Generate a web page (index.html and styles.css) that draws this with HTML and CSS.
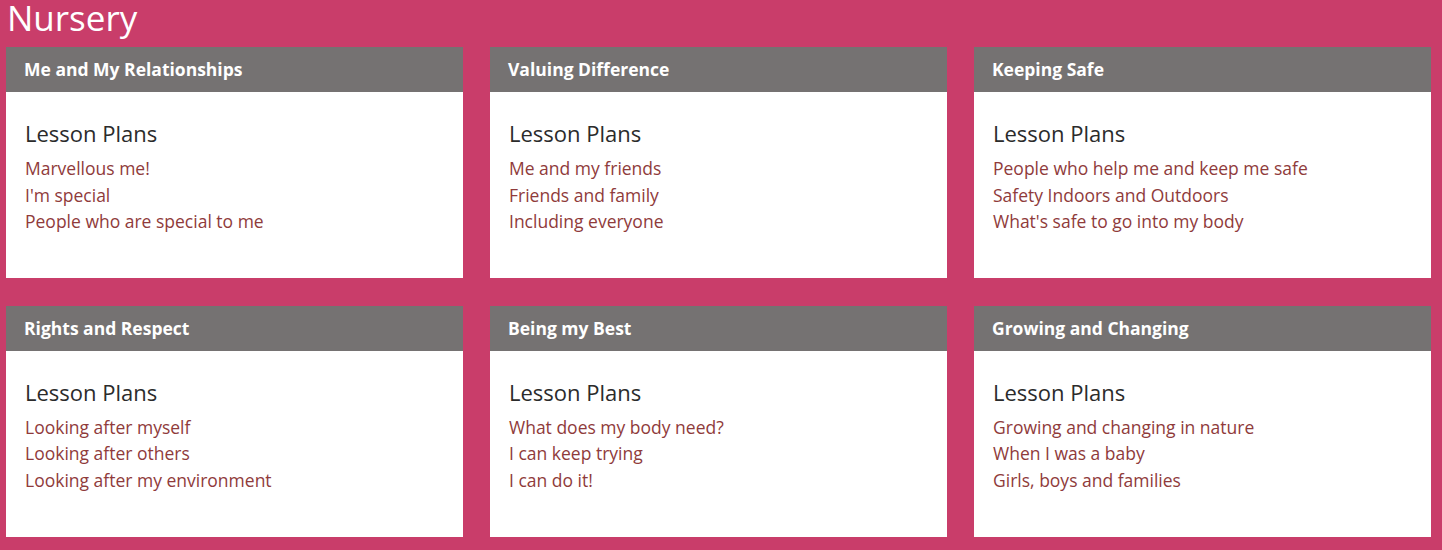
FILE: index.html
```html
<!DOCTYPE html>
<html lang="en">
<head>
<meta charset="utf-8">
<title>Nursery</title>
<link rel="stylesheet" href="styles.css">
</head>
<body>
<h1 class="page-title">Nursery</h1>
<div class="grid">
  <section class="card">
    <h2 class="card-head">Me and My Relationships</h2>
    <div class="card-body">
      <h3 class="card-sub">Lesson Plans</h3>
      <ul class="links">
        <li><a href="#">Marvellous me!</a></li>
        <li><a href="#">I'm special</a></li>
        <li><a href="#">People who are special to me</a></li>
      </ul>
    </div>
  </section>
  <section class="card">
    <h2 class="card-head">Valuing Difference</h2>
    <div class="card-body">
      <h3 class="card-sub">Lesson Plans</h3>
      <ul class="links">
        <li><a href="#">Me and my friends</a></li>
        <li><a href="#">Friends and family</a></li>
        <li><a href="#">Including everyone</a></li>
      </ul>
    </div>
  </section>
  <section class="card">
    <h2 class="card-head">Keeping Safe</h2>
    <div class="card-body">
      <h3 class="card-sub">Lesson Plans</h3>
      <ul class="links">
        <li><a href="#">People who help me and keep me safe</a></li>
        <li><a href="#">Safety Indoors and Outdoors</a></li>
        <li><a href="#">What's safe to go into my body</a></li>
      </ul>
    </div>
  </section>
  <section class="card">
    <h2 class="card-head">Rights and Respect</h2>
    <div class="card-body">
      <h3 class="card-sub">Lesson Plans</h3>
      <ul class="links">
        <li><a href="#">Looking after myself</a></li>
        <li><a href="#">Looking after others</a></li>
        <li><a href="#">Looking after my environment</a></li>
      </ul>
    </div>
  </section>
  <section class="card">
    <h2 class="card-head">Being my Best</h2>
    <div class="card-body">
      <h3 class="card-sub">Lesson Plans</h3>
      <ul class="links">
        <li><a href="#">What does my body need?</a></li>
        <li><a href="#">I can keep trying</a></li>
        <li><a href="#">I can do it!</a></li>
      </ul>
    </div>
  </section>
  <section class="card">
    <h2 class="card-head">Growing and Changing</h2>
    <div class="card-body">
      <h3 class="card-sub">Lesson Plans</h3>
      <ul class="links">
        <li><a href="#">Growing and changing in nature</a></li>
        <li><a href="#">When I was a baby</a></li>
        <li><a href="#">Girls, boys and families</a></li>
      </ul>
    </div>
  </section>
</div>
</body>
</html>
```

FILE: styles.css
```css
html, body {
  margin: 0;
  padding: 0;
}
body {
  background: #c93d6a;
  font-family: "Open Sans", "Noto Sans", sans-serif;
  height: 550px;
  overflow: hidden;
}
.page-title {
  margin: 0;
  padding: 0 0 0 7px;
  font-size: 35px;
  line-height: 36px;
  font-weight: 400;
  color: #ffffff;
}
.grid {
  display: grid;
  grid-template-columns: repeat(3, 1fr);
  column-gap: 27px;
  row-gap: 27.5px;
  padding: 11px 11px 0 6px;
}
.card {
  background: #ffffff;
  display: flex;
  flex-direction: column;
}
.card-head {
  margin: 0;
  background: #757272;
  color: #ffffff;
  height: 45px;
  line-height: 45px;
  font-size: 17.5px;
  font-weight: 700;
  padding-left: 18px;
}
.card-body {
  padding: 29px 19px 43.5px 19px;
}
.card-sub {
  margin: 0 0 10px 0;
  font-size: 22px;
  line-height: 24px;
  font-weight: 400;
  color: #2b2b2b;
}
.links {
  list-style: none;
  margin: 0;
  padding: 0;
}
.links li {
  font-size: 17.5px;
  line-height: 26.5px;
}
.links a {
  color: #8f3b3b;
  text-decoration: none;
}
```
